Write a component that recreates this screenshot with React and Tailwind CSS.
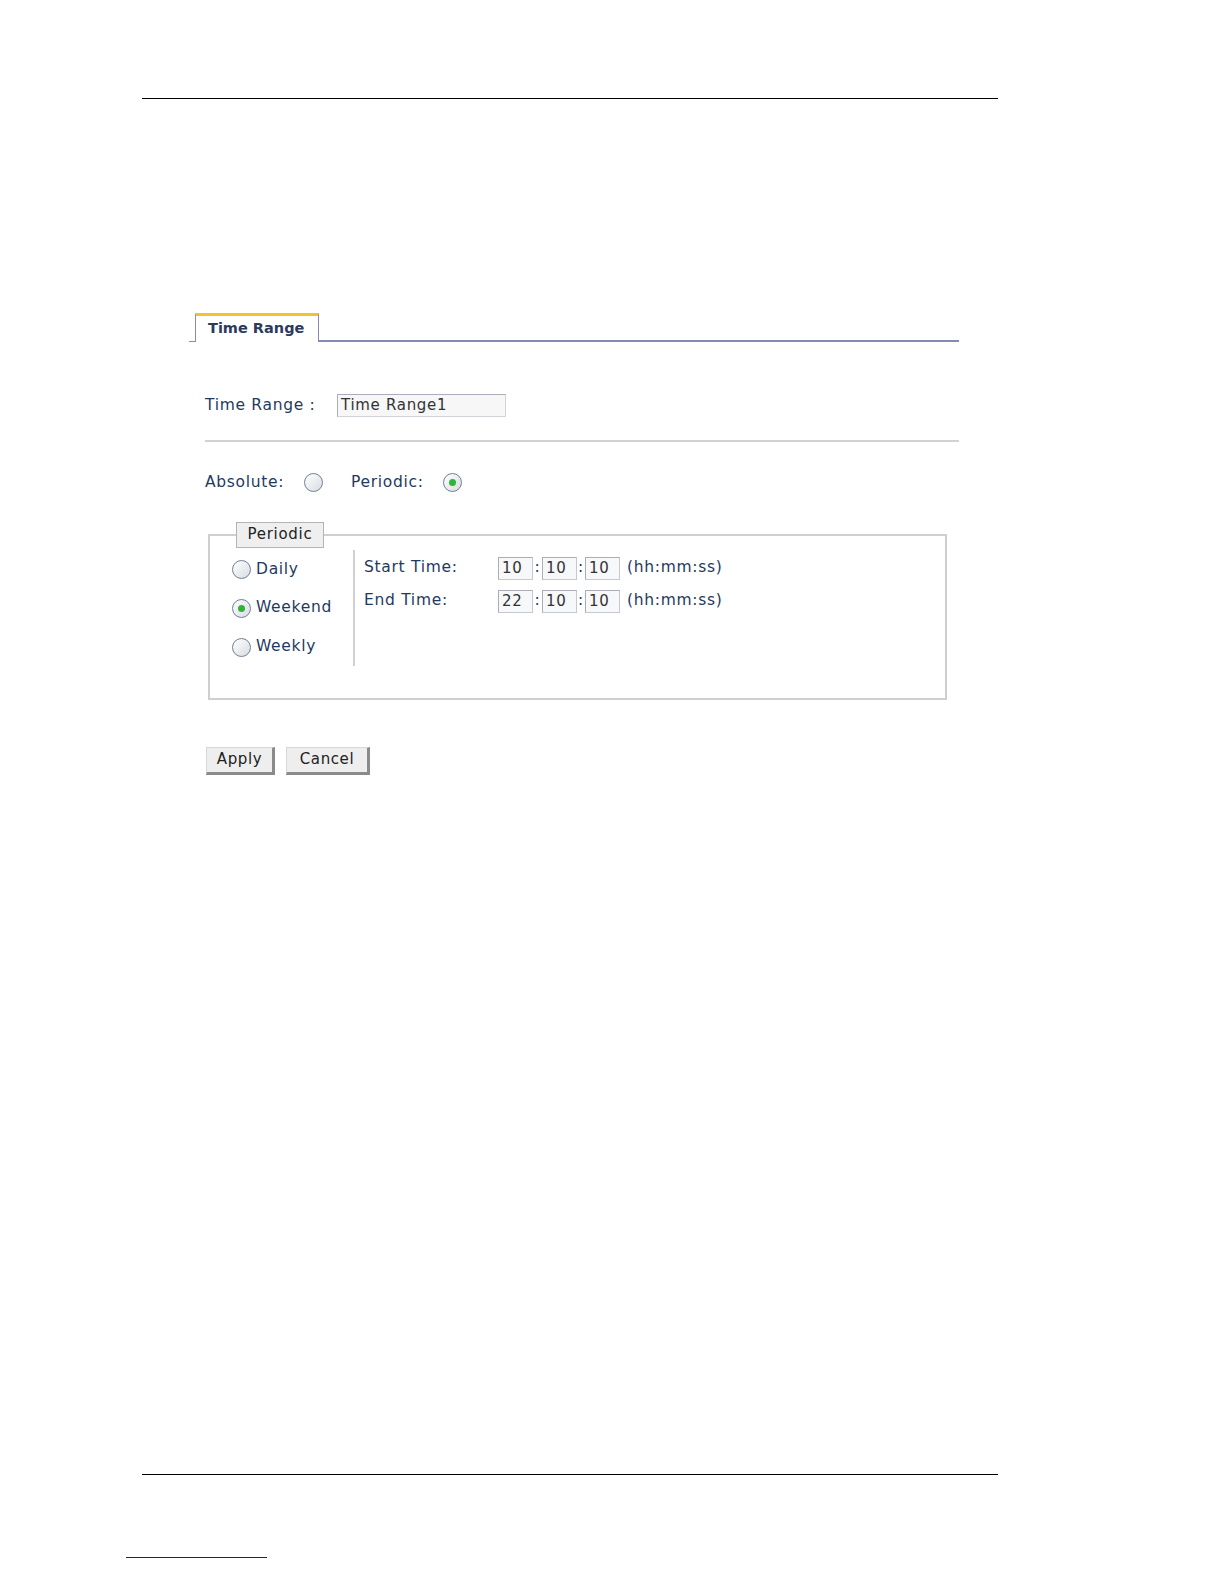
import React from "react";

const font = { fontFamily: '"DejaVu Sans", Verdana, sans-serif' };

function Radio({ checked }) {
  return (
    <span className="inline-flex size-[19px] items-center justify-center rounded-full border-[1.5px] border-[#6f7f96] bg-gradient-to-br from-[#ffffff] to-[#d8dce2]">
      {checked && <span className="size-[7px] rounded-full bg-[#2fb43a]" />}
    </span>
  );
}

function TimeBox({ value }) {
  return (
    <span className="inline-flex h-[23px] w-[35px] items-center border border-[#c4c8d0] border-t-[#a8adb8] border-l-[#a8adb8] bg-[#f7f8fa] pl-[3px] text-[15px] tracking-[0.6px] text-[#333]">
      {value}
    </span>
  );
}

function TimeRow({ label, h, m, s }) {
  return (
    <div className="flex h-[33px] items-center">
      <span className="w-[134px]">{label}</span>
      <TimeBox value={h} />
      <span className="w-[9px] text-center">:</span>
      <TimeBox value={m} />
      <span className="w-[8px] text-center">:</span>
      <TimeBox value={s} />
      <span className="ml-[7px]">(hh:mm:ss)</span>
    </div>
  );
}

function Button({ children, w }) {
  return (
    <button className={`h-[28px] ${w} border border-[#d8d8d8] border-r-[3px] border-b-[3px] border-r-[#8a8a8a] border-b-[#8a8a8a] bg-[#eeeeee] text-[15px] tracking-[0.6px] text-[#222]`}>
      {children}
    </button>
  );
}

export default function App() {
  return (
    <div className="relative h-[1584px] w-[1224px] bg-white" style={font}>
      <div className="pt-[98px]">
        <div className="ml-[142px] w-[856px] border-t border-black" />
      </div>

      {/* tab strip */}
      <div className="ml-[189px] mt-[214px] flex w-[770px] items-end">
        <div className="h-px w-[6px] bg-[#8888b4]" />
        <div className="flex h-[29px] w-[124px] items-center border-x border-t-[3px] border-x-[#8888b4] border-t-[#f2c230] pl-[12px] text-[14.5px] font-bold text-[#2c3a5c]">
          Time Range
        </div>
        <div className="h-[2px] flex-1 bg-[#8888b4]" />
      </div>

      <div className="ml-[205px] w-[754px] text-[15.5px] tracking-[0.7px] text-[#1f3a62]">
        {/* name row */}
        <div className="mt-[52px] flex items-center">
          <span className="w-[132px]">Time Range :</span>
          <span className="flex h-[23px] w-[169px] items-center border border-[#d0d3d8] border-t-[#a9aeb8] border-l-[#a9aeb8] bg-[#f7f7f8] pl-[3px] text-[15px] text-[#333]">
            Time Range1
          </span>
        </div>

        <div className="mt-[23px] h-[2px] bg-[#d2d2d2]" />

        {/* type row */}
        <div className="mt-[29px] flex items-center">
          <span className="w-[99px]">Absolute:</span>
          <Radio />
          <span className="ml-[28px] w-[92px]">Periodic:</span>
          <Radio checked />
        </div>

        {/* periodic fieldset */}
        <fieldset className="mt-[27px] ml-[3px] w-[739px] border-2 border-[#cfcfcf] px-[22px] pb-[31px] pt-[2px]">
          <legend className="ml-[4px] flex h-[26px] w-[88px] items-center justify-center border border-[#b4b4b4] bg-[#efefef] text-[15px] text-[#222]">
            Periodic
          </legend>
          <div className="flex">
            <div className="w-[121px] pt-[1px]">
              <div className="flex h-[38px] items-center gap-[5px]">
                <Radio />
                <span>Daily</span>
              </div>
              <div className="flex h-[39px] items-center gap-[5px]">
                <Radio checked />
                <span>Weekend</span>
              </div>
              <div className="flex h-[39px] items-center gap-[5px]">
                <Radio />
                <span>Weekly</span>
              </div>
            </div>
            <div className="h-[116px] w-[2px] bg-[#d0d0d0]" />
            <div className="pl-[9px] pt-[2px]">
              <TimeRow label="Start Time:" h="10" m="10" s="10" />
              <TimeRow label="End Time:" h="22" m="10" s="10" />
            </div>
          </div>
        </fieldset>

        <div className="mt-[47px] flex gap-[11px] pl-[1px]">
          <Button w="w-[69px]">Apply</Button>
          <Button w="w-[84px]">Cancel</Button>
        </div>
      </div>

      <div className="absolute left-[142px] top-[1474px] w-[856px] border-t border-black" />
      <div className="absolute left-[126px] top-[1557px] w-[141px] border-t border-[#1a1a8c]" />
    </div>
  );
}
